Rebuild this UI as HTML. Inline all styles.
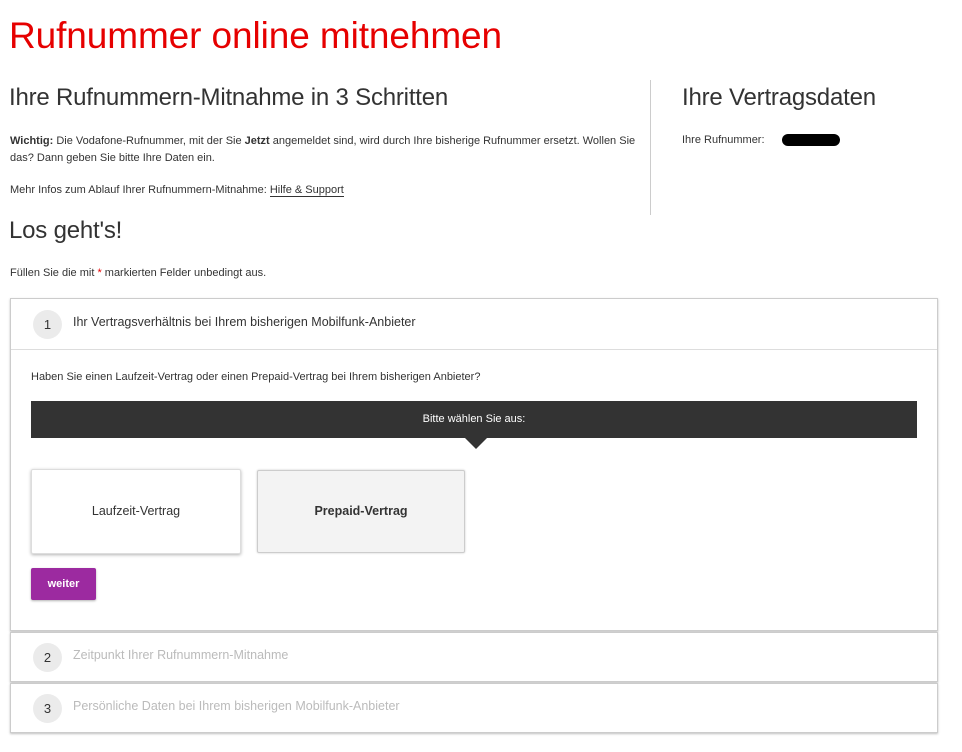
<!DOCTYPE html>
<html><head><meta charset="utf-8"><style>
*{box-sizing:border-box;margin:0;padding:0}
body{width:962px;height:752px;background:#fff;font-family:"Liberation Sans",sans-serif;color:#333;position:relative;overflow:hidden}
.a{position:absolute;white-space:nowrap}
h1{position:absolute;left:9px;top:15px;font-size:37px;font-weight:normal;color:#e60000;letter-spacing:-0.1px}
.h2{font-size:24px;font-weight:300;color:#333;letter-spacing:-0.2px}
.s{font-size:11px;color:#333}
.card{position:absolute;left:10px;width:928px;border:1px solid #ccc;box-shadow:0 1px 2px rgba(0,0,0,.25);background:#fff}
.circ{position:absolute;left:22px;width:29px;height:29px;border-radius:50%;background:#ebebeb;font-size:13px;text-align:center;line-height:29px;color:#333}
.ct{position:absolute;left:62px;font-size:12.5px;letter-spacing:0px}
.btn{position:absolute;border:1px solid #ddd;border-radius:2px;box-shadow:0 1px 3px rgba(0,0,0,.3);font-size:12.5px;text-align:center}
</style></head><body>
<h1>Rufnummer online mitnehmen</h1>
<div class="a h2" style="left:9px;top:84px">Ihre Rufnummern-Mitnahme in 3 Schritten</div>
<div class="a h2" style="left:682px;top:84px">Ihre Vertragsdaten</div>
<div class="a" style="left:650px;top:80px;width:1px;height:135px;background:#ccc"></div>
<div class="a s" style="left:682px;top:134px">Ihre Rufnummer:</div>
<div class="a" style="left:782px;top:134px;width:58px;height:12px;background:#000;border-radius:6px"></div>
<div class="a s" style="left:10px;top:133px;line-height:17px"><b>Wichtig:</b> Die Vodafone-Rufnummer, mit der Sie <b>Jetzt</b> angemeldet sind, wird durch Ihre bisherige Rufnummer ersetzt. Wollen Sie<br>das? Dann geben Sie bitte Ihre Daten ein.</div>
<div class="a s" style="left:10px;top:184px">Mehr Infos zum Ablauf Ihrer Rufnummern-Mitnahme: <span style="border-bottom:1px solid #333">Hilfe &amp; Support</span></div>
<div class="a h2" style="left:9px;top:217px">Los geht's!</div>
<div class="a s" style="left:10px;top:267px">Füllen Sie die mit <span style="color:#e60000">*</span> markierten Felder unbedingt aus.</div>
<div class="card" style="top:298px;height:333px">
 <div class="circ" style="top:11px">1</div>
 <div class="ct" style="top:16px">Ihr Vertragsverhältnis bei Ihrem bisherigen Mobilfunk-Anbieter</div>
 <div class="a" style="left:0;top:50px;width:926px;height:1px;background:#ddd"></div>
 <div class="a s" style="left:20px;top:72px">Haben Sie einen Laufzeit-Vertrag oder einen Prepaid-Vertrag bei Ihrem bisherigen Anbieter?</div>
 <div class="a" style="left:20px;top:102px;width:886px;height:37px;background:#333;color:#fff;font-size:11px;text-align:center;line-height:37px">Bitte wählen Sie aus:</div>
 <div class="a" style="left:454px;top:139px;width:0;height:0;border-left:11px solid transparent;border-right:11px solid transparent;border-top:11px solid #333"></div>
 <div class="btn" style="left:20px;top:170px;width:210px;height:85px;line-height:83px;background:#fff">Laufzeit-Vertrag</div>
 <div class="btn" style="left:246px;top:171px;width:208px;height:83px;line-height:81px;background:#f3f3f3;font-weight:bold;border-color:#ccc;box-shadow:0 0 2px rgba(0,0,0,.2)">Prepaid-Vertrag</div>
 <div class="a" style="left:20px;top:269px;width:65px;height:32px;background:#9c2aa0;border-radius:2px;color:#fff;font-size:11px;font-weight:bold;text-align:center;line-height:32px;box-shadow:0 1px 2px rgba(0,0,0,.3)">weiter</div>
</div>
<div class="card" style="top:632px;height:50px">
 <div class="circ" style="top:10px">2</div>
 <div class="ct" style="top:15px;color:#bbb">Zeitpunkt Ihrer Rufnummern-Mitnahme</div>
</div>
<div class="card" style="top:683px;height:50px">
 <div class="circ" style="top:10px">3</div>
 <div class="ct" style="top:15px;color:#bbb">Persönliche Daten bei Ihrem bisherigen Mobilfunk-Anbieter</div>
</div>
</body></html>
